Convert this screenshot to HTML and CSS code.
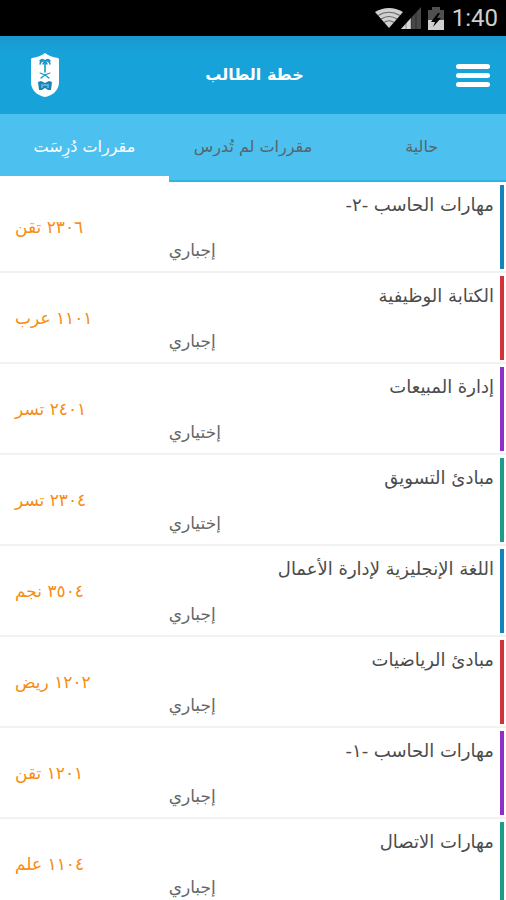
FILE: index.html
```html
<!DOCTYPE html>
<html lang="ar" dir="rtl">
<head>
<meta charset="utf-8">
<meta name="viewport" content="width=device-width, initial-scale=1">
<title>خطة الطالب</title>
<link rel="stylesheet" href="styles.css">
</head>
<body>
<div class="status" dir="ltr">
  <svg class="wifi" viewBox="0 0 28 20" aria-hidden="true">
    <path d="M0 4Q14-4 28 4L14 20Z" fill="#d0d0d0"/>
    <path d="M3 7.500Q14 1 25 7.500M6 11Q14 6 22 11M9 14.500Q14 11 19 14.500" fill="none" stroke="#666" stroke-width="1.200"/>
  </svg>
  <svg class="signal" viewBox="0 0 20 22" aria-hidden="true">
    <path d="M0 22L20 0V22Z" fill="#484848"/>
    <path d="M0 22L10 11V22Z" fill="#d8d8d8"/>
    <path d="M5 12V22M10 8V22M15 3V22" stroke="#000" stroke-opacity=".35"/>
  </svg>
  <svg class="battery" viewBox="0 0 16 23" aria-hidden="true">
    <path d="M4 0H12V3H16V23H0V3H4Z" fill="#505050"/>
    <path d="M0 13H16V23H0Z" fill="#d0d0d0"/>
    <path d="M10 6L3 15H7L5 20L13 11H9L12 6Z" fill="#000"/>
  </svg>
  <span class="clock">1:40</span>
</div>
<header class="header">
  <button class="menu" type="button" aria-label="القائمة"><span></span><span></span><span></span></button>
  <h1 class="heading">خطة الطالب</h1>
  <svg class="crest" viewBox="0 0 28 44" aria-hidden="true">
    <path d="M14 0Q19 4 27 5Q28 5 28 7V30Q27 41 14 44Q1 41 0 30V7Q0 5 1 5Q9 4 14 0Z" fill="#fff"/>
    <g fill="none" stroke="#1696cb" stroke-linecap="round">
      <path d="M14 8V19" stroke-width="1.600"/>
      <path d="M14 8Q11 5 9 8M14 8Q17 5 19 8M14 8Q10 7 9 11M14 8Q18 7 19 11M14 8L12 11M14 8L16 11" stroke-width="1.500"/>
      <path d="M9 20Q14 21 18 25M19 20Q14 21 10 25" stroke-width="1.200"/>
    </g>
    <path d="M7 29L10 28L14 30L18 28L21 29L20 37H17L14 35L11 37H8Z" fill="#1684b5"/>
    <path d="M10 32H18M10 34H12M16 34H18" stroke="#9fd5ef"/>
  </svg>
</header>
<nav class="tabs">
  <a class="tab" href="#current">حالية</a>
  <a class="tab" href="#remaining">مقررات لم تُدرس</a>
  <a class="tab active" href="#studied" aria-current="page">مقررات دُرِسَت</a>
</nav>
<main id="studied">
  <ul class="courses">
    <li class="course blue"><h2 class="name">مهارات الحاسب -٢-</h2><span class="code">٢٣٠٦ تقن</span><span class="type">إجباري</span></li>
    <li class="course red"><h2 class="name">الكتابة الوظيفية</h2><span class="code">١١٠١ عرب</span><span class="type">إجباري</span></li>
    <li class="course purple"><h2 class="name">إدارة المبيعات</h2><span class="code">٢٤٠١ تسر</span><span class="type">إختياري</span></li>
    <li class="course green"><h2 class="name">مبادئ التسويق</h2><span class="code">٢٣٠٤ تسر</span><span class="type">إختياري</span></li>
    <li class="course blue"><h2 class="name">اللغة الإنجليزية لإدارة الأعمال</h2><span class="code">٣٥٠٤ نجم</span><span class="type">إجباري</span></li>
    <li class="course red"><h2 class="name">مبادئ الرياضيات</h2><span class="code">١٢٠٢ ريض</span><span class="type">إجباري</span></li>
    <li class="course purple"><h2 class="name">مهارات الحاسب -١-</h2><span class="code">١٢٠١ تقن</span><span class="type">إجباري</span></li>
    <li class="course green"><h2 class="name">مهارات الاتصال</h2><span class="code">١١٠٤ علم</span><span class="type">إجباري</span></li>
  </ul>
</main>
</body>
</html>
```
FILE: styles.css
```css
* { box-sizing: border-box; }

body {
  margin: 0;
  background: #fff;
  color: #4c4c4c;
  font-family: "DejaVu Sans", sans-serif;
}

.status {
  display: flex;
  align-items: center;
  justify-content: flex-end;
  height: 36px;
  padding-right: 8px;
  background: #000;
}
.wifi { width: 28px; height: 20px; }
.signal { width: 20px; height: 22px; margin-left: -2px; }
.battery { width: 16px; height: 23px; margin-left: 7px; }
.clock {
  margin-left: 8px;
  color: #cfcfcf;
  font: 24px/36px Roboto, sans-serif;
}

.header {
  display: flex;
  align-items: center;
  justify-content: space-between;
  height: 78px;
  padding: 0 16px 0 31px;
  background: linear-gradient(#1898ce, #18a2da 16px);
}
.menu {
  display: flex;
  flex-direction: column;
  gap: 4px;
  width: 34px;
  padding: 0;
  border: 0;
  background: none;
}
.menu span { height: 5px; border-radius: 3px; background: #fff; }
.heading {
  margin: 0;
  padding-right: 6px;
  color: #fff;
  font-size: 16px;
  line-height: 24px;
}
.crest { width: 28px; height: 44px; }

.tabs {
  display: grid;
  grid-template-columns: repeat(3, 1fr);
  height: 68px;
  background: #4cc1f0;
}
.tab {
  padding-top: 20px;
  border-bottom: 2px solid #2cb5e5;
  color: #55666e;
  font-size: 16px;
  line-height: 26px;
  text-align: center;
  text-decoration: none;
  white-space: nowrap;
}
.tab.active { border-bottom: 6px solid #fff; color: #fff; }

.courses { margin: 0; padding: 0; list-style: none; }
.course {
  display: grid;
  grid-template-columns: 2fr 1fr;
  grid-template-rows: repeat(3, 23px);
  height: 91px;
  padding-top: 11px;
  border-bottom: 2px solid #f2f2f2;
  line-height: 23px;
  background: linear-gradient(var(--stripe), var(--stripe)) right 2px top 3px / 4px 84px no-repeat;
}
.blue { --stripe: #1485bb; }
.red { --stripe: #d0333a; }
.purple { --stripe: #8e30c7; }
.green { --stripe: #1c9d8a; }

.name {
  grid-column: 1 / 3;
  margin: 0;
  padding-right: 12px;
  font-size: 18px;
  font-weight: 400;
}
.code {
  grid-area: 2 / 2;
  padding-left: 15px;
  color: #f78c14;
  font-size: 17px;
  text-align: left;
}
.type {
  grid-area: 3 / 1;
  color: #666;
  font-size: 17px;
  text-align: left;
}
```
